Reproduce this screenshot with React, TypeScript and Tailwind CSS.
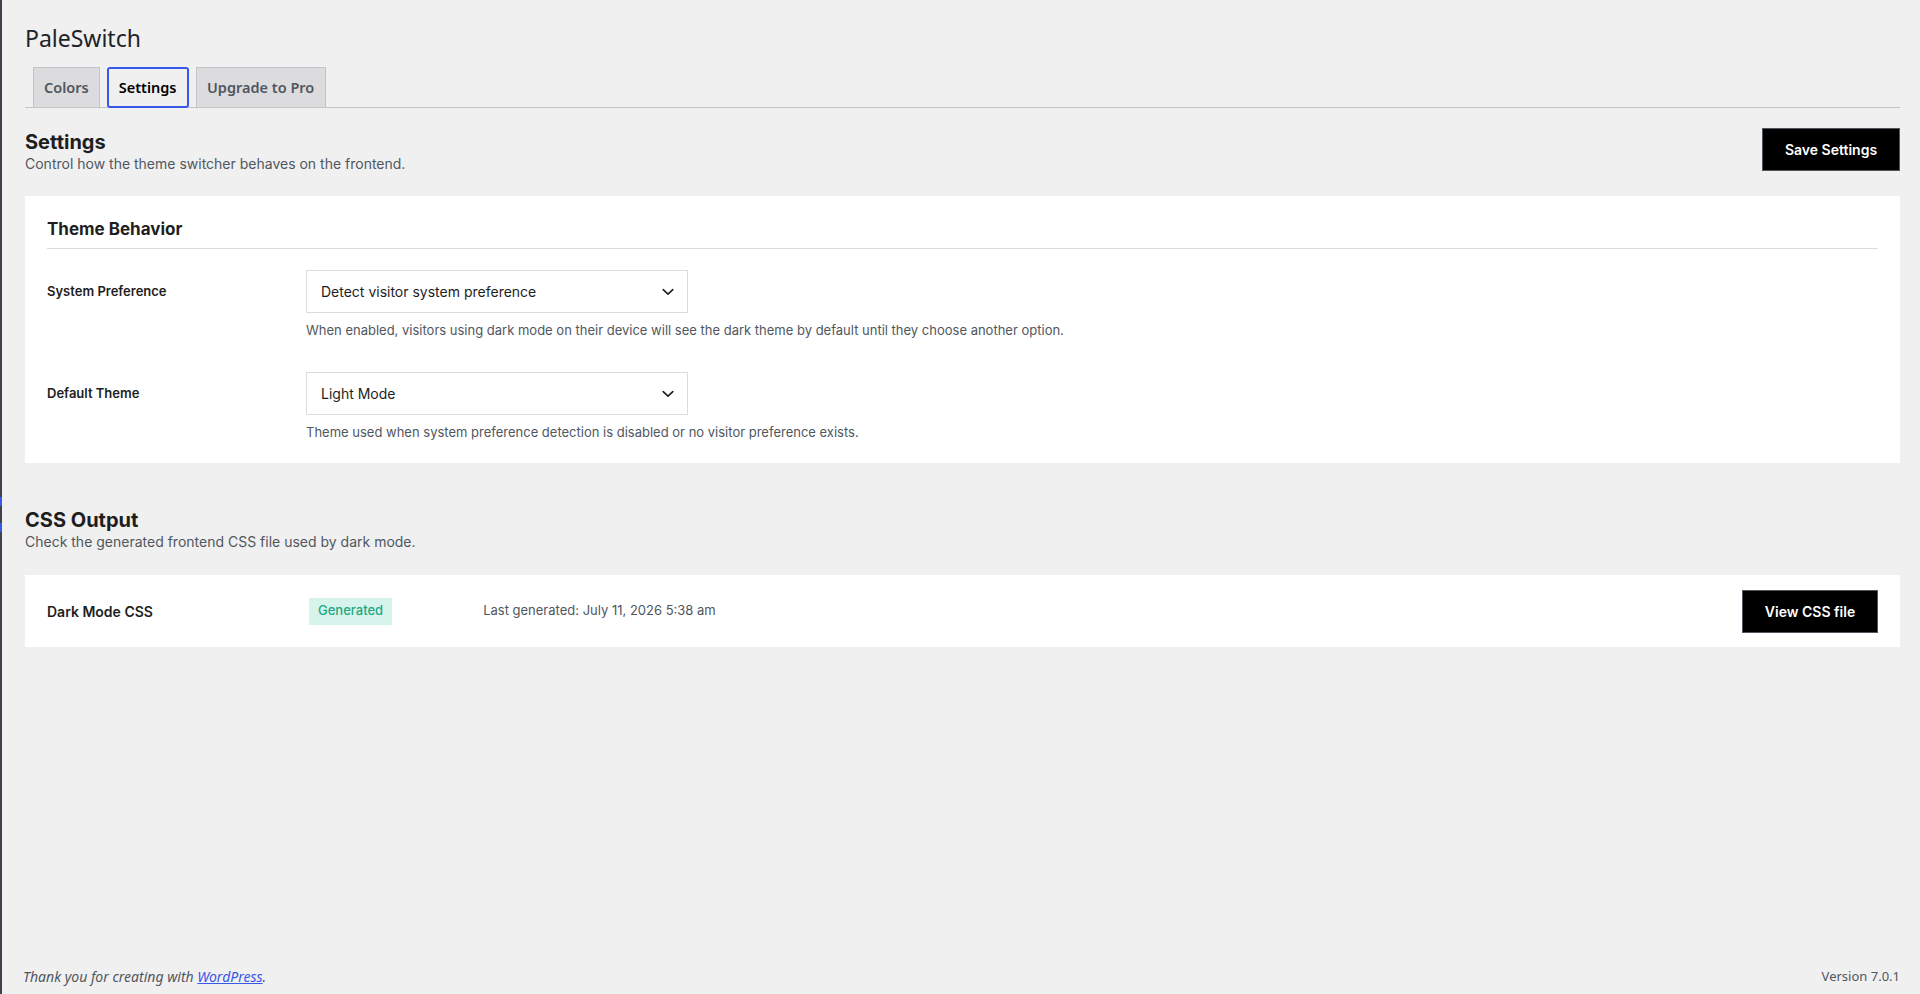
import React from 'react';

const wp = { fontFamily: '"Noto Sans", "Open Sans", sans-serif' };
const ui = { fontFamily: 'Inter, "Noto Sans", sans-serif' };

const Chevron = () => (
  <svg width="12" height="8" viewBox="0 0 12 8" fill="none" className="text-[#1e1e1e]">
    <path d="M1.2 1.6 L6 6.2 L10.8 1.6" stroke="currentColor" strokeWidth="1.6" strokeLinecap="round" strokeLinejoin="round" />
  </svg>
);

const SelectRow = ({ label, value, help }: { label: string; value: string; help: string }) => (
  <div className="flex">
    <div className="w-[259px] shrink-0 h-[43px] flex items-center text-[13px] font-semibold text-[#1e1e1e]">{label}</div>
    <div>
      <div className="w-[382px] h-[43px] border border-[#dcdcde] bg-white flex items-center justify-between pl-[14px] pr-[13px] text-[14px] text-[#1e1e1e]">
        <span>{value}</span>
        <Chevron />
      </div>
      <p className="mt-[8px] text-[13px] leading-[18px] text-[#50575e]">{help}</p>
    </div>
  </div>
);

export default function App() {
  return (
    <div className="relative min-h-[994px] bg-[#f0f0f1] flex flex-col" style={ui}>
      {/* admin menu edge */}
      <div className="absolute left-0 top-0 bottom-0 w-[2px] bg-[#3c434a]" />
      <div className="absolute left-0 top-[497px] w-[2px] h-[9px] bg-[#3858e9]" />
      <div className="absolute left-0 top-[523px] w-[2px] h-[9px] bg-[#3858e9]" />

      <div className="flex-1 pl-[25px] pr-[20px]">
        <h1 className="pt-[23px] text-[23px] leading-[30px] font-normal text-[#1d2327]" style={wp}>PaleSwitch</h1>

        {/* Tabs */}
        <div className="mt-[15px] flex items-end gap-[7px] border-b border-[#c3c4c7] pl-[8px] h-[40px]" style={wp}>
          <div className="h-[40px] px-[10px] flex items-center border border-b-0 border-[#c3c4c7] bg-[#dcdcde] text-[14.5px] font-semibold text-[#50575e]">Colors</div>
          <div className="h-[41px] px-[10px] flex items-center border-2 border-[#3858e9] rounded-[3px] bg-[#f0f0f1] text-[14.5px] font-semibold text-black relative top-[1px]">Settings</div>
          <div className="h-[40px] px-[10.5px] flex items-center border border-b-0 border-[#c3c4c7] bg-[#dcdcde] text-[14.5px] font-semibold text-[#50575e]">Upgrade to Pro</div>
        </div>

        {/* Settings header */}
        <div className="mt-[20px] flex items-start justify-between">
          <div className="pt-[1px]">
            <h2 className="text-[20px] leading-[26px] font-bold text-[#1e1e1e]">Settings</h2>
            <p className="text-[14px] leading-[18px] text-[#50575e]">Control how the theme switcher behaves on the frontend.</p>
          </div>
          <button className="w-[138px] h-[43px] bg-black text-white text-[14px] font-semibold border border-[#50575e]">Save Settings</button>
        </div>

        {/* Theme Behavior card */}
        <div className="mt-[23px] bg-white px-[22px] pt-[21px] pb-[22px]">
          <h3 className="text-[17px] leading-[24px] font-bold text-[#1e1e1e] pb-[7px] border-b border-[#dcdcde]">Theme Behavior</h3>
          <div className="mt-[21px] flex flex-col gap-[33px]">
            <SelectRow
              label="System Preference"
              value="Detect visitor system preference"
              help="When enabled, visitors using dark mode on their device will see the dark theme by default until they choose another option."
            />
            <SelectRow
              label="Default Theme"
              value="Light Mode"
              help="Theme used when system preference detection is disabled or no visitor preference exists."
            />
          </div>
        </div>

        {/* CSS Output */}
        <div className="mt-[44px]">
          <h2 className="text-[20px] leading-[26px] font-bold text-[#1e1e1e]">CSS Output</h2>
          <p className="text-[14px] leading-[18px] text-[#50575e]">Check the generated frontend CSS file used by dark mode.</p>
        </div>
        <div className="mt-[24px] bg-white h-[72px] pl-[22px] pr-[22px] flex items-center">
          <div className="w-[262px] text-[14px] font-semibold text-[#1e1e1e]">Dark Mode CSS</div>
          <span className="h-[27px] px-[9px] flex items-center bg-[#d6f3ec] text-[13px] font-medium text-[#1fa882]">Generated</span>
          <span className="ml-[91px] text-[13px] text-[#50575e]">Last generated: July 11, 2026 5:38 am</span>
          <button className="ml-auto w-[136px] h-[43px] bg-black text-white text-[14px] font-semibold border border-[#50575e]">View CSS file</button>
        </div>
      </div>

      {/* Footer */}
      <div className="pl-[23px] pr-[20px] pb-[7px] flex justify-between items-center text-[13px] text-[#50575e]" style={wp}>
        <p className="italic text-[14px]">
          Thank you for creating with <a href="#" className="underline text-[#3858e9]">WordPress</a>.
        </p>
        <p>Version 7.0.1</p>
      </div>
    </div>
  );
}
